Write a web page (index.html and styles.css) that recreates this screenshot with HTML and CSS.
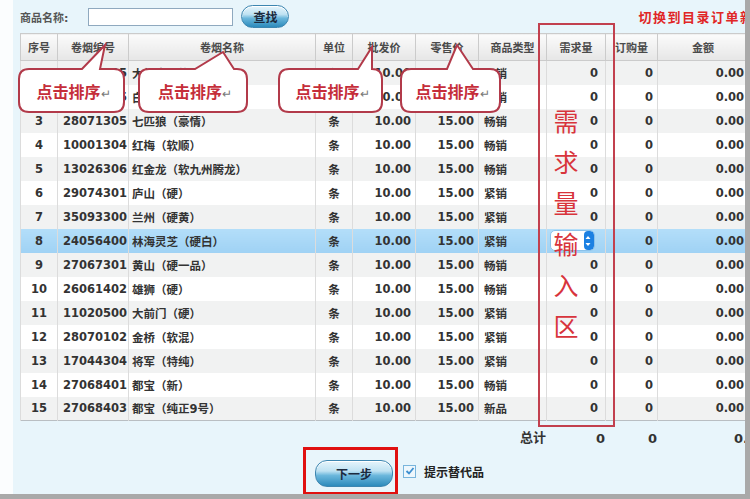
FILE: index.html
```html
<!DOCTYPE html>
<html lang="zh-CN">
<head>
    <meta charset="UTF-8">
    <title>卷烟订单</title>
    <link rel="stylesheet" href="styles.css">
</head>
<body>
<div class="screen">
    <div class="frame">
        <div class="toolbar">
            <span class="search-label">商品名称:</span>
            <input class="search-input" type="text">
            <button class="btn-glossy btn-search">查找</button>
            <a class="switch-link">切换到目录订单新版</a>
        </div>

        <table class="grid">
            <colgroup>
                <col class="c-no"><col class="c-code"><col class="c-name"><col class="c-unit">
                <col class="c-price"><col class="c-price"><col class="c-type">
                <col class="c-need"><col class="c-order"><col class="c-sum">
            </colgroup>
            <thead>
                <tr>
                    <th>序号</th><th>卷烟编号</th><th>卷烟名称</th><th>单位</th><th>批发价</th>
                    <th>零售价</th><th>商品类型</th><th>需求量</th><th>订购量</th><th>金额</th>
                </tr>
            </thead>
            <tbody>
                <tr><td class="t-c">1</td><td>28071205</td><td>大红鹰（软）</td><td class="t-c">条</td><td class="t-r">10.00</td><td class="t-r">15.00</td><td class="t-type">畅销</td><td class="t-need">0</td><td class="t-r">0</td><td class="t-r">0.00</td></tr>
                <tr><td class="t-c">2</td><td>43010205</td><td>白沙（精品）</td><td class="t-c">条</td><td class="t-r">10.00</td><td class="t-r">15.00</td><td class="t-type">畅销</td><td class="t-need">0</td><td class="t-r">0</td><td class="t-r">0.00</td></tr>
                <tr><td class="t-c">3</td><td>28071305</td><td>七匹狼（豪情）</td><td class="t-c">条</td><td class="t-r">10.00</td><td class="t-r">15.00</td><td class="t-type">畅销</td><td class="t-need">0</td><td class="t-r">0</td><td class="t-r">0.00</td></tr>
                <tr><td class="t-c">4</td><td>10001304</td><td>红梅（软顺）</td><td class="t-c">条</td><td class="t-r">10.00</td><td class="t-r">15.00</td><td class="t-type">畅销</td><td class="t-need">0</td><td class="t-r">0</td><td class="t-r">0.00</td></tr>
                <tr><td class="t-c">5</td><td>13026306</td><td>红金龙（软九州腾龙）</td><td class="t-c">条</td><td class="t-r">10.00</td><td class="t-r">15.00</td><td class="t-type">畅销</td><td class="t-need">0</td><td class="t-r">0</td><td class="t-r">0.00</td></tr>
                <tr><td class="t-c">6</td><td>29074301</td><td>庐山（硬）</td><td class="t-c">条</td><td class="t-r">10.00</td><td class="t-r">15.00</td><td class="t-type">紧销</td><td class="t-need">0</td><td class="t-r">0</td><td class="t-r">0.00</td></tr>
                <tr><td class="t-c">7</td><td>35093300</td><td>兰州（硬黄）</td><td class="t-c">条</td><td class="t-r">10.00</td><td class="t-r">15.00</td><td class="t-type">紧销</td><td class="t-need">0</td><td class="t-r">0</td><td class="t-r">0.00</td></tr>
                <tr class="is-selected"><td class="t-c">8</td><td>24056400</td><td>林海灵芝（硬白）</td><td class="t-c">条</td><td class="t-r">10.00</td><td class="t-r">15.00</td><td class="t-type">紧销</td>
                    <td class="t-edit">
                        <span class="qty-input">
                            <span class="qty-field"></span>
                            <span class="qty-spin">
                                <svg width="8" height="18" viewBox="0 0 8 18"><path d="M1.5 7 L4 4 L6.5 7 Z" fill="#fff"/><path d="M1.5 11 L4 14 L6.5 11 Z" fill="#fff"/></svg>
                            </span>
                        </span>
                    </td>
                    <td class="t-r">0</td><td class="t-r">0.00</td></tr>
                <tr><td class="t-c">9</td><td>27067301</td><td>黄山（硬一品）</td><td class="t-c">条</td><td class="t-r">10.00</td><td class="t-r">15.00</td><td class="t-type">畅销</td><td class="t-need">0</td><td class="t-r">0</td><td class="t-r">0.00</td></tr>
                <tr><td class="t-c">10</td><td>26061402</td><td>雄狮（硬）</td><td class="t-c">条</td><td class="t-r">10.00</td><td class="t-r">15.00</td><td class="t-type">畅销</td><td class="t-need">0</td><td class="t-r">0</td><td class="t-r">0.00</td></tr>
                <tr><td class="t-c">11</td><td>11020500</td><td>大前门（硬）</td><td class="t-c">条</td><td class="t-r">10.00</td><td class="t-r">15.00</td><td class="t-type">紧销</td><td class="t-need">0</td><td class="t-r">0</td><td class="t-r">0.00</td></tr>
                <tr><td class="t-c">12</td><td>28070102</td><td>金桥（软混）</td><td class="t-c">条</td><td class="t-r">10.00</td><td class="t-r">15.00</td><td class="t-type">紧销</td><td class="t-need">0</td><td class="t-r">0</td><td class="t-r">0.00</td></tr>
                <tr><td class="t-c">13</td><td>17044304</td><td>将军（特纯）</td><td class="t-c">条</td><td class="t-r">10.00</td><td class="t-r">15.00</td><td class="t-type">紧销</td><td class="t-need">0</td><td class="t-r">0</td><td class="t-r">0.00</td></tr>
                <tr><td class="t-c">14</td><td>27068401</td><td>都宝（新）</td><td class="t-c">条</td><td class="t-r">10.00</td><td class="t-r">15.00</td><td class="t-type">畅销</td><td class="t-need">0</td><td class="t-r">0</td><td class="t-r">0.00</td></tr>
                <tr><td class="t-c">15</td><td>27068403</td><td>都宝（纯正9号）</td><td class="t-c">条</td><td class="t-r">10.00</td><td class="t-r">15.00</td><td class="t-type">新品</td><td class="t-need">0</td><td class="t-r">0</td><td class="t-r">0.00</td></tr>
            </tbody>
        </table>

        <table class="totals">
            <colgroup>
                <col class="c-no"><col class="c-code"><col class="c-name"><col class="c-unit">
                <col class="c-price"><col class="c-price"><col class="c-type">
                <col class="c-need"><col class="c-order"><col class="c-sum-wide">
            </colgroup>
            <tr>
                <td colspan="6"></td>
                <td class="t-r">总计</td><td class="t-r">0</td><td class="t-r">0</td><td class="t-r">0.00</td>
            </tr>
        </table>

        <div class="actions">
            <div class="mark-box">
                <button class="btn-glossy btn-next">下一步</button>
            </div>
            <label class="hint">
                <span class="check">
                    <svg width="10" height="10" viewBox="0 0 10 10"><path d="M1.5 5 L4 7.5 L8.5 2" fill="none" stroke="#3d8fd0" stroke-width="1.8"/></svg>
                </span>
                提示替代品
            </label>
        </div>
    </div>

    <!-- 标注层 -->
    <div class="callout callout-1">
        <svg width="107" height="45" viewBox="0 0 107 45"><path d="M11,1 L64,1 L87,-23 L82,1 L96,1 Q106,1 106,11 L106,34 Q106,44 96,44 L11,44 Q1,44 1,34 L1,11 Q1,1 11,1 Z"/></svg>
        <span class="callout-text">点击排序<i>↵</i></span>
    </div>
    <div class="callout callout-2">
        <svg width="110" height="45" viewBox="0 0 110 45"><path d="M11,1 L57,1 L85,-16 L96,1 L99,1 Q109,1 109,11 L109,34 Q109,44 99,44 L11,44 Q1,44 1,34 L1,11 Q1,1 11,1 Z"/></svg>
        <span class="callout-text">点击排序<i>↵</i></span>
    </div>
    <div class="callout callout-3">
        <svg width="105" height="45" viewBox="0 0 105 45"><path d="M11,1 L80,1 L94,-21 L94,1 Q104,1 104,11 L104,34 Q104,44 94,44 L11,44 Q1,44 1,34 L1,11 Q1,1 11,1 Z"/></svg>
        <span class="callout-text">点击排序<i>↵</i></span>
    </div>
    <div class="callout callout-4">
        <svg width="101" height="45" viewBox="0 0 101 45"><path d="M11,1 L47,1 L57,-23 L73,1 L90,1 Q100,1 100,11 L100,34 Q100,44 90,44 L11,44 Q1,44 1,34 L1,11 Q1,1 11,1 Z"/></svg>
        <span class="callout-text">点击排序<i>↵</i></span>
    </div>

    <div class="col-mark"></div>
    <div class="col-mark-text">需求量输入区</div>
</div>
</body>
</html>
```

FILE: styles.css
```css
* {
    margin: 0;
    padding: 0;
    box-sizing: border-box;
}

body {
    background: #a9a9a9;
    font-family: "DejaVu Sans", "Noto Sans CJK SC", sans-serif;
    color: #333;
}

.screen {
    position: relative;
    width: 750px;
    height: 499px;
    overflow: hidden;
}

.frame {
    width: 745px;
    height: 494px;
    overflow: hidden;
    background: #e8f5fb;
    border-left: 13px solid #fbfdfe;
    padding-left: 7px;
}

/* 顶部查询栏 */
.toolbar {
    display: flex;
    align-items: center;
    height: 33px;
    margin-right: -24px;
}

.search-label {
    font-size: 11px;
    color: #555;
    font-weight: bold;
}

.search-input {
    width: 145px;
    height: 18px;
    margin-left: 20px;
    border: 1px solid #8fa9bf;
    background: #fff;
}

.btn-glossy {
    border: 1px solid #3d86b0;
    border-radius: 12px;
    background: linear-gradient(to bottom, #e6f5fc 0%, #bfe2f2 40%, #6bb7dc 58%, #2c8abb 100%);
    box-shadow: inset 0 1px 0 #fff;
    font-family: "DejaVu Sans", "Noto Sans CJK SC", sans-serif;
    font-weight: bold;
    font-size: 12px;
    color: #1c2a3e;
}

.btn-search {
    width: 48px;
    height: 23px;
    margin-left: 8px;
}

.switch-link {
    margin-left: auto;
    font-size: 13px;
    font-weight: bold;
    letter-spacing: 1.5px;
    color: #e02626;
    white-space: nowrap;
}

/* 表格 */
.grid,
.totals {
    border-collapse: collapse;
    table-layout: fixed;
}

.grid {
    width: 728px;
    border: 1px solid #b9bec2;
}

.c-no { width: 37px; }
.c-code { width: 71px; }
.c-name { width: 187px; }
.c-unit { width: 37px; }
.c-price { width: 63px; }
.c-type { width: 68px; }
.c-need { width: 59px; }
.c-order { width: 52px; }
.c-sum { width: 91px; }
.c-sum-wide { width: 109px; }

.grid th {
    height: 27px;
    background: linear-gradient(to bottom, #fbfbfb, #e6e6e6);
    border: 1px solid #cbcbcb;
    font-size: 11px;
    font-weight: bold;
    color: #4a4a4a;
    white-space: nowrap;
    overflow: hidden;
}

.grid td {
    height: 24px;
    padding: 0 3px;
    border-left: 1px solid #dcdcdc;
    font-size: 11.5px;
    font-weight: bold;
    color: #333;
    white-space: nowrap;
    overflow: hidden;
}

.grid td:nth-child(2) {
    padding-left: 5px;
    padding-right: 0;
    text-overflow: clip;
}

.grid tbody tr:nth-child(odd) td {
    background: #f1f2f2;
}

.grid tbody tr:nth-child(even) td {
    background: #fff;
}

.grid tbody tr.is-selected td {
    background: linear-gradient(to bottom, #b3def9, #9fd2f4);
}

.t-c { text-align: center; }
.t-r { text-align: right; }

.grid td.t-r {
    padding-right: 4px;
}

.grid td.t-type {
    padding-left: 5px;
}

.grid td.t-need {
    text-align: right;
    padding-right: 7px;
}

.grid td.t-edit {
    padding-left: 3px;
}

.qty-input {
    display: flex;
    width: 45px;
    height: 21px;
    border: 1px solid #8cc2ea;
    border-radius: 5px;
    background: #fff;
    overflow: hidden;
}

.qty-field {
    flex: 1;
}

.qty-spin {
    display: flex;
    align-items: center;
    width: 10px;
    background: #1b80e2;
    border-radius: 4px;
}

/* 合计 */
.totals {
    width: 746px;
}

.totals td {
    height: 26px;
    padding: 0 0 1px;
    vertical-align: bottom;
    font-size: 13px;
    font-weight: bold;
    color: #333;
    white-space: nowrap;
}

/* 底部按钮 */
.actions {
    display: flex;
    align-items: center;
    height: 48px;
}

.mark-box {
    margin-left: 283px;
    border: 3px solid #e01010;
    padding: 10px 2px 5px 9px;
}

.btn-next {
    display: block;
    width: 78px;
    height: 27px;
}

.hint {
    display: flex;
    align-items: center;
    gap: 8px;
    margin-left: 5px;
    font-size: 12px;
    font-weight: bold;
    color: #222;
}

.check {
    display: flex;
    align-items: center;
    justify-content: center;
    width: 13px;
    height: 13px;
    border: 1px solid #79b5dc;
    background: #eef7fc;
}

/* 标注 */
.callout {
    position: absolute;
    top: 68px;
    height: 45px;
    display: flex;
    align-items: center;
    justify-content: center;
}

.callout svg {
    position: absolute;
    top: 0;
    left: 0;
    overflow: visible;
}

.callout path {
    fill: #fff;
    stroke: #b23a4a;
    stroke-width: 2;
}

.callout-text {
    position: relative;
    font-family: "Noto Sans CJK SC", sans-serif;
    font-size: 16px;
    font-weight: bold;
    color: #c52e3a;
    padding-left: 4px;
    white-space: nowrap;
}

.callout-text i {
    font-style: normal;
    font-size: 12px;
    font-weight: normal;
    color: #777;
}

.callout-1 { left: 18px; width: 107px; }
.callout-2 { left: 138px; width: 110px; }
.callout-3 { left: 278px; width: 105px; }
.callout-4 { left: 400px; width: 101px; }

.col-mark {
    position: absolute;
    left: 538px;
    top: 23px;
    width: 77px;
    height: 404px;
    border: 2px solid #c2404e;
}

.col-mark-text {
    position: absolute;
    left: 553px;
    top: 100px;
    width: 26px;
    font-family: "Noto Sans CJK SC", sans-serif;
    font-size: 25px;
    line-height: 41px;
    color: #d8343c;
    text-align: center;
}
```
